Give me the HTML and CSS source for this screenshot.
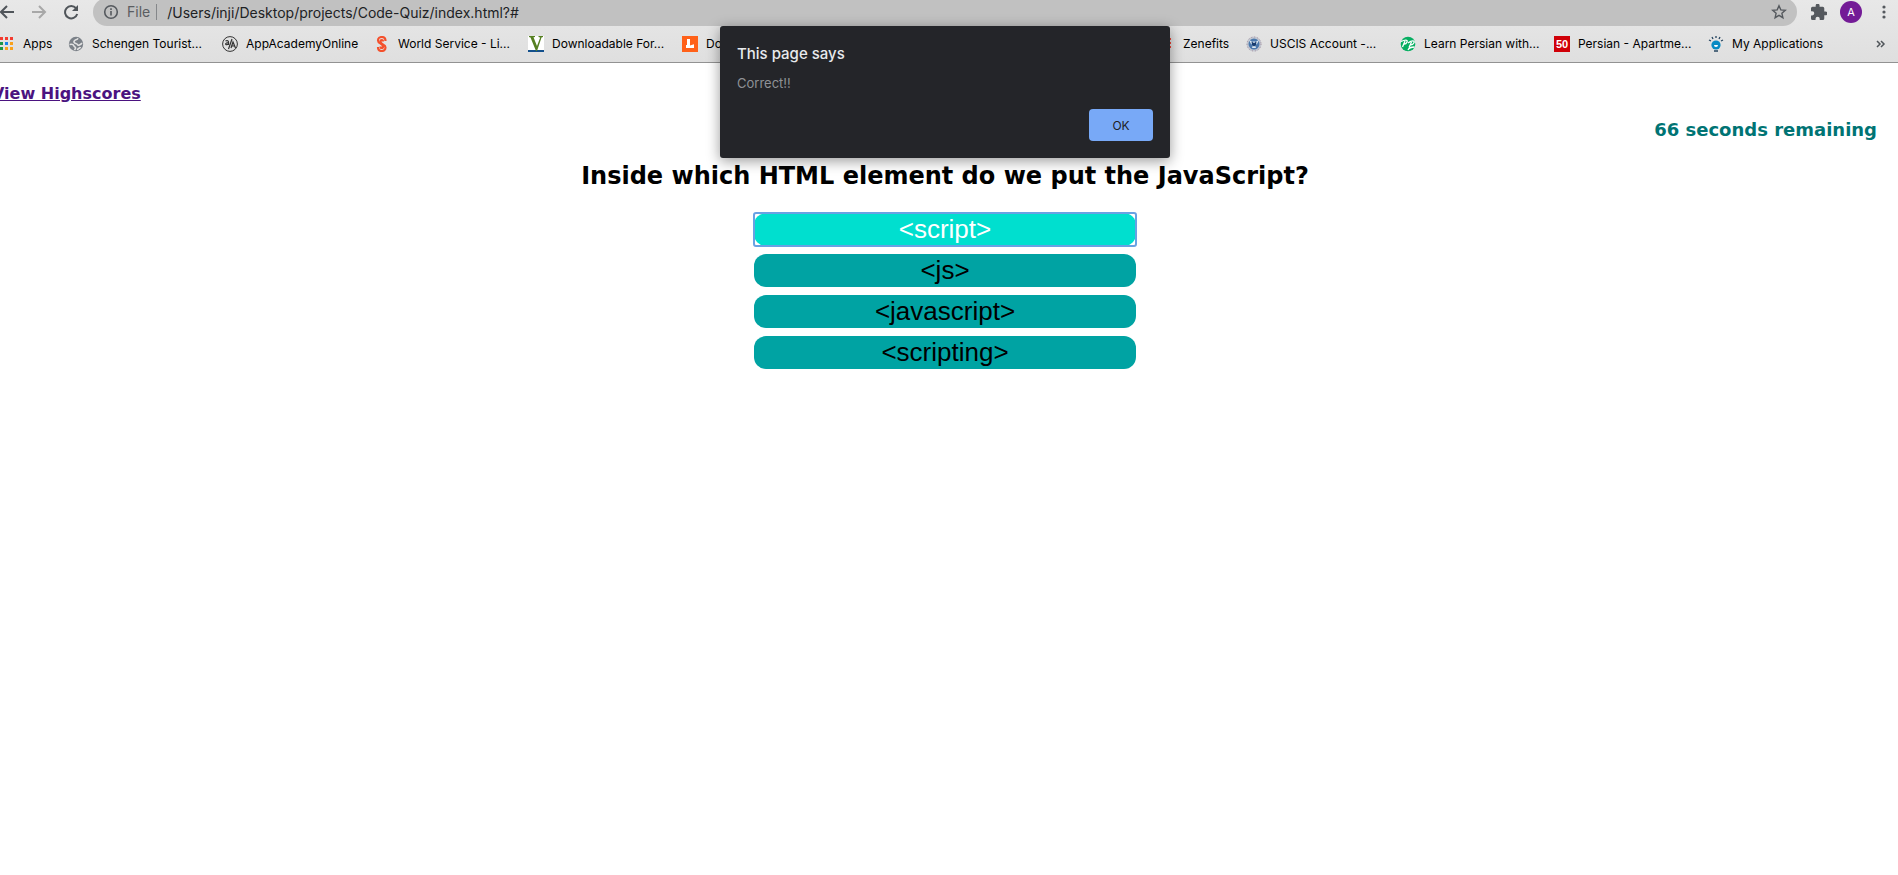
FILE: index.html
```html
<!DOCTYPE html>
<html lang="en">
<head>
<meta charset="utf-8">
<title>Code Quiz</title>
<link rel="stylesheet" href="styles.css">
</head>
<body>
<header class="chrome">
  <div class="toolbar">
    <button class="tool" aria-label="Back"><svg width="16" height="16" viewBox="1 0 16 16" fill="none" stroke="#50555a" stroke-width="2"><path d="M15 8H2M8 2L2 8l6 6"/></svg></button>
    <button class="tool" aria-label="Forward"><svg width="16" height="16" viewBox="1 0 16 16" fill="none" stroke="#a8a8a8" stroke-width="2"><path d="M1 8h13M8 2l6 6-6 6"/></svg></button>
    <button class="tool" aria-label="Reload"><svg width="16" height="16" viewBox="1 0 16 16"><path d="M13 4.2A6.2 6.2 0 1 0 14.2 10" fill="none" stroke="#50555a" stroke-width="2"/><path d="M15 1v6H9z" fill="#50555a"/></svg></button>
    <div class="address">
      <svg width="16" height="16" viewBox="0 0 16 16" fill="none" stroke="#55595e" stroke-width="1.6"><circle cx="8" cy="8" r="6.3"/><path d="M8 7v4.500M8 4.200v1.700"/></svg>
      <label class="scheme" for="url">File</label>
      <input class="url" id="url" type="text" value="/Users/inji/Desktop/projects/Code-Quiz/index.html?#">
      <button class="tool" aria-label="Bookmark this page"><svg width="16" height="16" viewBox="0 0 16 16" fill="none" stroke="#55595e" stroke-width="1.400"><path d="M8 1.800l1.800 4.100 4.500.4-3.400 3 1 4.400L8 11.400l-3.900 2.300 1-4.400-3.400-3 4.500-.4z"/></svg></button>
    </div>
    <button class="tool" aria-label="Extensions"><svg width="16" height="16" viewBox="2 1.500 20.500 20.500" fill="#55595e"><path d="M20.500 11H19V7a2 2 0 0 0-2-2h-4V3.500a2.500 2.500 0 0 0-5 0V5H4a2 2 0 0 0-2 2v3.800h1.500a2.700 2.700 0 0 1 0 5.400H2V20a2 2 0 0 0 2 2h3.800v-1.500a2.700 2.700 0 0 1 5.400 0V22H17a2 2 0 0 0 2-2v-4h1.500a2.500 2.500 0 0 0 0-5z"/></svg></button>
    <button class="avatar">A</button>
    <button class="tool" aria-label="Menu"><svg width="16" height="16" viewBox="0 0 16 16" fill="#55595e"><circle cx="8" cy="3" r="1.600"/><circle cx="8" cy="8" r="1.600"/><circle cx="8" cy="13" r="1.600"/></svg></button>
  </div>
  <nav class="bookmarks">
    <a class="mark apps" href="#"><svg width="16" height="16" viewBox="0 0 16 16"><path d="M1 1h3v3H1zM6 1h3v3H6zM11 1h3v3h-3z" fill="#f33b2f"/><path d="M1 6h3v3H1zM1 11h3v3H1z" fill="#1d9648"/><path d="M6 6h3v3H6z" fill="#1683ea"/><path d="M11 6h3v3h-3zM6 11h3v3H6zM11 11h3v3h-3z" fill="#f9a11b"/></svg>Apps</a>
    <a class="mark" href="#"><svg width="16" height="16" viewBox="0 0 16 16"><circle cx="8" cy="8" r="7.200" fill="#7b8188"/><path d="M10 2.200C9 4.500 6.500 3 6 5.500S9 7 9.500 8.500s3 .5 4.500-1.500M1.500 8.500c2-.5 4 0 4.500 1.500s2 .5 1.500 2.500L6.500 14M9.500 14c0-2 2.500-1.500 3-3" fill="none" stroke="#e2e2e2" stroke-width="1.600"/></svg>Schengen Tourist...</a>
    <a class="mark academy" href="#"><svg width="16" height="16" viewBox="0 0 16 16" fill="none" stroke="#333"><circle cx="8" cy="8" r="7.400"/><path d="M3.500 5c2-1 3 0 3 1v3M6.500 6.500C3 6.500 3 9 5 8.700l1.500-1M10 3L6.500 13M9 12l2-6 2.500 6M10 10h3" stroke-width="1.200"/></svg>AppAcademyOnline</a>
    <a class="mark" href="#"><svg width="16" height="16" viewBox="0 0 16 16" fill="none" stroke="#f4502c"><path d="M11.500 5C11.500-.5 4 0 4 4.500 4 8 9 7 9 10.500c0 2-2.500 2-2.500 0" stroke-width="2.200"/><path d="M4 11c0 5.500 7.500 5 7.500.5C11.500 8 6.500 9 6.500 5.500c0-2 2.500-2 2.500 0" stroke-width="2.200"/></svg>World Service - Li...</a>
    <a class="mark" href="#"><svg width="16" height="16" viewBox="0 0 16 16"><path d="M0 0h16v16H0z" fill="#fff"/><path d="M0 14h16v2H0z" fill="#13508c"/><path d="M1 0h6v1L5.500 1.200 9 10l3.200-8.500L10.500 1V0H15v1l-1.500.5L9 15H8L2.500 1.500 1 1z" fill="#568022"/></svg>Downloadable For...</a>
    <a class="mark" href="#"><svg width="16" height="16" viewBox="0 0 16 16"><path d="M0 0h16v16H0z" fill="#ff6119"/><path d="M5 3h3v6.500l4-1.200V12H4V9h1z" fill="#fff"/></svg>Documents</a>
    <a class="mark zenefits" href="#"><svg width="16" height="16" viewBox="0 0 16 16"><path d="M0 2h12v2H0zM0 6h12v2H0zM0 10h12v2H0z" fill="#f04638"/></svg>Zenefits</a>
    <a class="mark" href="#"><svg width="16" height="16" viewBox="0 0 16 16"><circle cx="8" cy="8" r="7.500" fill="#c3c8d1"/><circle cx="8" cy="8" r="7" fill="none" stroke="#a98fa0" stroke-dasharray="1 2"/><circle cx="8" cy="8" r="5.500" fill="#4a78ac"/><path d="M3 4l4 2 1-1 1 1 4-2-2 4-2 1 1 3H6l1-3-2-1z" fill="#dde8f0"/><path d="M5.500 5.500L8 7l2.500-1.500L10 9l-2 1.500L6 9z" fill="#173d70"/></svg>USCIS Account -...</a>
    <a class="mark" href="#"><svg width="16" height="16" viewBox="0 0 16 16"><circle cx="8" cy="8" r="7.300" fill="#06ae61"/><path d="M1 5.500c4-2 7-2 6 .5S3.500 8 3.500 8M5 5l-2.500 6M8 7c4-3 7-2.500 6-.3S10 9 10 9M11.500 6L9 11.500M8 14c1-2.500 4-3 6.500-3" fill="none" stroke="#fff" stroke-width="1.300"/></svg>Learn Persian with...</a>
    <a class="mark" href="#"><svg width="16" height="16" viewBox="0 0 16 16"><path d="M0 0h16v16H0z" fill="#d00008"/><text x="8" y="12" class="fifty">50</text></svg>Persian - Apartme...</a>
    <a class="mark applications" href="#"><svg width="16" height="16" viewBox="0 0 16 16"><circle cx="8" cy="9" r="4.600" fill="#078bc4"/><path d="M6 9h4a2 2 0 0 1-4 0" fill="#fff"/><path d="M6 15h4M8 0v2M4 1l1 2M12 1l-1 2M1 4l2 1M15 4l-2 1" fill="none" stroke="#24445f" stroke-width="1.300"/></svg>My Applications</a>
    <button class="more" aria-label="More bookmarks"><svg width="10" height="10" viewBox="0 0 10 10" fill="none" stroke="#50555a" stroke-width="1.500"><path d="M1 2l3 3-3 3M5 2l3 3-3 3"/></svg></button>
  </nav>
</header>
<main class="quiz">
  <a class="scores" href="#">View Highscores</a>
  <p class="timer">66 seconds remaining</p>
  <h1 class="question">Inside which HTML element do we put the JavaScript?</h1>
  <div class="answers">
    <button class="answer chosen">&lt;script&gt;</button>
    <button class="answer">&lt;js&gt;</button>
    <button class="answer">&lt;javascript&gt;</button>
    <button class="answer">&lt;scripting&gt;</button>
  </div>
</main>
<div class="dialog" role="alertdialog" aria-labelledby="dialog-title" aria-describedby="dialog-text">
  <h2 class="dialog-title" id="dialog-title">This page says</h2>
  <p class="dialog-text" id="dialog-text">Correct!!</p>
  <button class="ok">OK</button>
</div>
</body>
</html>
```
FILE: styles.css
```css
* { box-sizing: border-box; }
body { margin: 0; background: #fff; overflow: hidden; font-family: "DejaVu Sans", Verdana, sans-serif; }
button { padding: 0; border: 0; background: none; font: inherit; }
svg { display: block; flex: none; }

.chrome { border-bottom: 1px solid #929292; background: linear-gradient(#e8e8e8, #dfdfdf); font-family: Inter, Roboto, sans-serif; overflow: hidden; }
.toolbar { display: flex; align-items: center; height: 28px; margin-top: -2px; padding-right: 6px; }
.tool { flex: none; width: 16px; margin-right: 16px; }
.address { flex: 1; display: flex; align-items: center; height: 28px; margin: 0 14px 0 -3px; padding: 0 10px; border-radius: 14px; background: #c1c1c1; font-size: 14px; }
.address .tool { margin: 0; }
.scheme { margin: 0 10px 0 8px; padding-right: 6px; border-right: 1px solid #85878a; color: #5a5d61; line-height: 16px; }
.url { flex: 1; min-width: 0; padding: 0; border: 0; outline: 0; background: none; color: #202124; font: inherit; }
.address + .tool { margin-right: 13px; }
.avatar { flex: none; width: 22px; height: 22px; margin-right: 14px; border-radius: 50%; background: #731b96; color: #fff; font-size: 11px; }
.toolbar > .tool:last-child { margin-right: 0; }

.bookmarks { display: flex; align-items: center; height: 36px; margin-left: -1px; padding-right: 12px; }
.mark { flex: none; display: flex; align-items: center; gap: 8px; width: 154px; color: #000; font-size: 12px; line-height: 16px; text-decoration: none; white-space: nowrap; }
.apps { width: 69px; }
.academy { width: 152px; }
.zenefits { width: 87px; margin-left: 323px; }
.applications { width: auto; }
.fifty { fill: #fff; font: bold 11px "Liberation Sans", sans-serif; text-anchor: middle; }
.more { margin-left: auto; }

.quiz { display: flex; flex-direction: column; margin-left: -8px; padding-top: 21px; }
.scores { align-self: flex-start; color: #4b1380; font-size: 16px; font-weight: bold; line-height: 20px; }
.timer { align-self: flex-end; margin: 15px 21px 0 0; color: #007474; font-size: 18px; font-weight: bold; line-height: 22px; }
.question { margin: 20px 0 0; font-size: 24px; line-height: 30px; text-align: center; }
.answers { display: flex; flex-direction: column; gap: 8px; width: 20%; margin: 22px auto 0; }
.answer { position: relative; height: 33px; border-radius: 12px; background: #00a3a3; color: #000; font: 26px "Liberation Sans", Arial, sans-serif; }
.chosen { background: #00dfcf; color: #fff; }
.chosen::after { content: ""; position: absolute; inset: -1px; border: 2px solid #68a2e3; border-radius: 3px; }

.dialog { position: absolute; top: 26px; left: 50%; display: flex; flex-direction: column; width: 450px; margin-left: -229px; padding: 17px; border-radius: 3px; background: #242529; box-shadow: 0 3px 14px rgba(0, 0, 0, .4); font-family: Inter, sans-serif; }
.dialog-title { margin: 0; color: #e8eaed; font-size: 15px; font-weight: 500; line-height: 22px; }
.dialog-text { margin: 9px 0 17px; color: #8f9296; font-size: 13px; line-height: 18px; }
.ok { align-self: flex-end; width: 64px; height: 32px; border-radius: 4px; background: #78a9f7; color: #202124; font-size: 12px; }
```
